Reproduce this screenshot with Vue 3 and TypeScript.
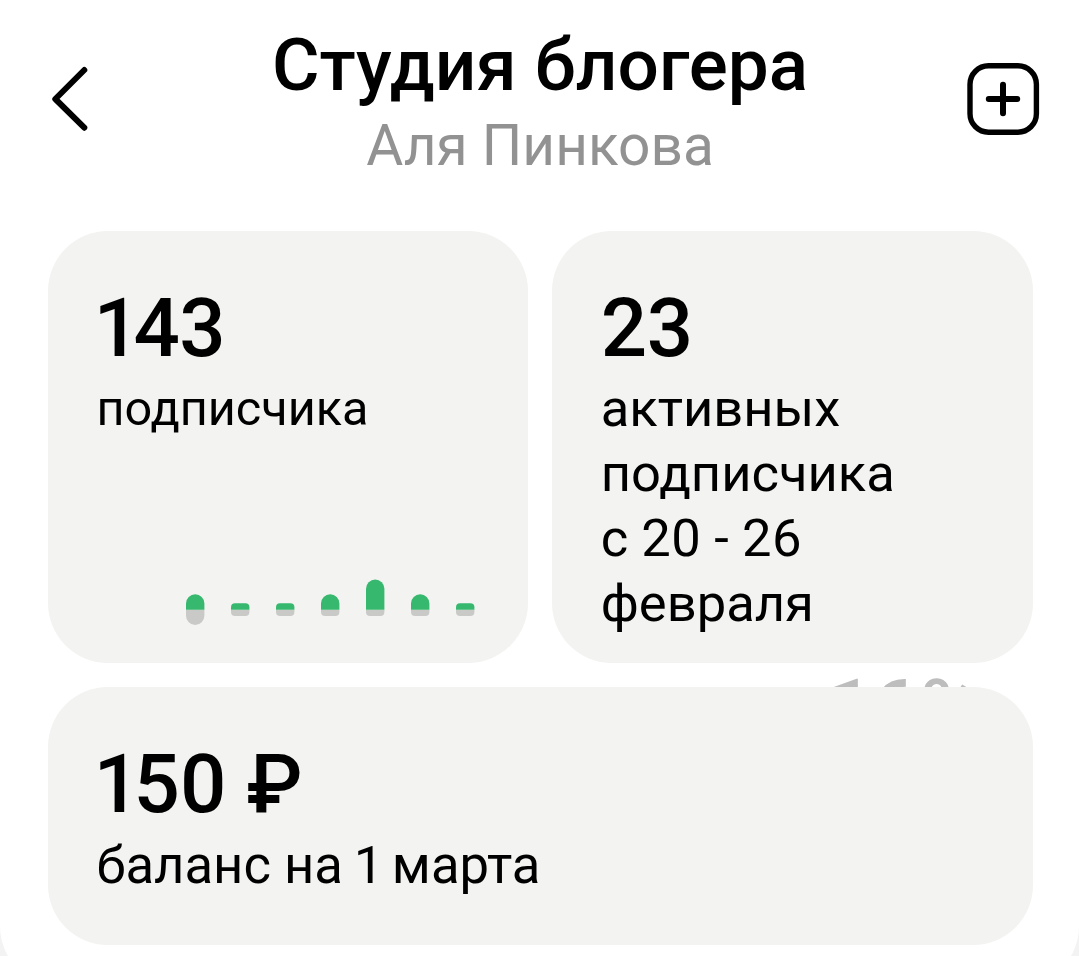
<script setup lang="ts">
interface Bar { x: number; top: number; dip: number }
const base = 609.8
const width = 18.4
const bars: Bar[] = [
  { x: 186, top: 594.3, dip: 625 },
  { x: 231, top: 603.3, dip: 616 },
  { x: 276, top: 603.3, dip: 616 },
  { x: 321, top: 594.3, dip: 616 },
  { x: 366, top: 579.5, dip: 616 },
  { x: 411, top: 594.3, dip: 616 },
  { x: 456, top: 603.3, dip: 616 },
]
// A bar half: square at the base line, rounded at its far end
const half = (x: number, end: number) => {
  const down = end > base
  const r = Math.abs(end - base) > 9.2 ? 9.2 : 4
  const y = down ? end - r : end + r
  const sweep = down ? 0 : 1
  return `M${x} ${base}V${y}A${r} ${r} 0 0 ${sweep} ${x + r} ${end}H${x + width - r}A${r} ${r} 0 0 ${sweep} ${x + width} ${y}V${base}Z`
}
</script>

<template>
  <div class="backdrop">
    <main class="sheet">
      <header class="header">
        <svg class="back" viewBox="0 0 40 68"><path d="M34.3 5L5.3 34L34.3 62.7" /></svg>
        <div class="titles">
          <h1>Студия блогера</h1>
          <p>Аля Пинкова</p>
        </div>
        <svg class="add" viewBox="0 0 74 74"><rect x="4" y="3.8" width="66.4" height="66.4" rx="18.5" /><path d="M22.8 37H51.2M37 22.8V51.2" /></svg>
      </header>
      <section class="cards">
        <span class="behind">16%</span>
        <article class="card">
          <strong>143</strong>
          <p>подписчика</p>
          <svg class="chart" viewBox="186 579 290 47">
            <g v-for="bar in bars" :key="bar.x">
              <path class="loss" :d="half(bar.x, bar.dip)" />
              <path class="gain" :d="half(bar.x, bar.top)" />
            </g>
          </svg>
        </article>
        <article class="card active">
          <strong>23</strong>
          <p>активных<br>подписчика<br>с 20 - 26<br>февраля</p>
        </article>
        <article class="card balance">
          <strong>150 ₽</strong>
          <p>баланс на 1 марта</p>
        </article>
      </section>
    </main>
  </div>
</template>

<style>
body { margin: 0; background: #fff; }
</style>
<style scoped>
.backdrop { height: 956px; overflow: hidden; background: #f3f3f3; font-family: Roboto, sans-serif; color: #000; font-variant-numeric: proportional-nums; }
.sheet { height: 986px; background: #fff; border-radius: 0 0 60px 60px; }
.header { height: 231.4px; display: grid; grid-template-columns: 74px 1fr 74px; padding: 0 39px 0 40px; box-sizing: border-box; }
.back { width: 40px; height: 68px; margin: 65px 0 0 10px; }
.add { width: 74px; height: 74px; margin-top: 62px; }
.header path, .header rect { fill: none; stroke: #000; stroke-width: 6; stroke-linecap: round; stroke-linejoin: round; }
.header rect { stroke-width: 5.4; }
.titles { text-align: center; }
h1 { font-size: 72.9px; font-weight: 500; line-height: 84px; margin: 23px 0 0; }
.titles p { font-size: 56.8px; line-height: 66px; margin: 6px 0 0; color: #929292; }
.cards { position: relative; display: grid; grid-template-columns: 480.4px 480.2px; grid-template-rows: 432px 258px; gap: 24px; margin-left: 48px; }
.card { position: relative; background: #f3f3f1; border-radius: 60px; padding: 48.4px; box-sizing: border-box; display: flex; flex-direction: column; }
.card strong { font-size: 81.6px; line-height: 96px; font-weight: 500; letter-spacing: -0.5px; white-space: nowrap; }
.card p { margin: 0; font-size: 48.6px; line-height: 65px; }
.card.active p { font-size: 52.5px; margin-top: 0.7px; }
.card.balance { grid-column: 1 / 3; }
.card.balance p { font-size: 52.6px; margin-top: 1px; }
.behind { position: absolute; left: 782px; top: 430px; font-size: 82px; line-height: 96px; font-weight: 500; letter-spacing: 2.6px; color: #bdbdbd; }
.chart { flex: none; width: 290px; height: 47px; margin: 138.2px 0 0 89.6px; }
.gain { fill: #37b86f; }
.loss { fill: #c9c9c8; }
</style>
